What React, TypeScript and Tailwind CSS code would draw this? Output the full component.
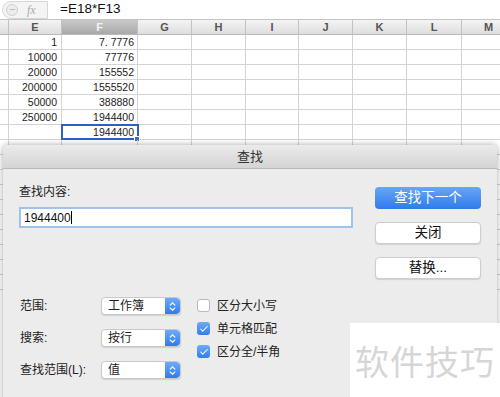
import { Check } from 'lucide-react'

const cols = [
  { key: '', w: 'w-[9px]' },
  { key: 'E', w: 'w-[53px]' },
  { key: 'F', w: 'w-[76px]' },
  { key: 'G', w: 'w-[54px]' },
  { key: 'H', w: 'w-[54px]' },
  { key: 'I', w: 'w-[53px]' },
  { key: 'J', w: 'w-[54px]' },
  { key: 'K', w: 'w-[54px]' },
  { key: 'L', w: 'w-[55px]' },
  { key: 'M', w: 'w-[54px]' },
]

const rows: [string, string][] = [
  ['1', '7. 7776'],
  ['10000', '77776'],
  ['20000', '155552'],
  ['200000', '1555520'],
  ['50000', '388880'],
  ['250000', '1944400'],
  ['', '1944400'],
  ['', ''],
  ['', ''],
  ['', ''],
  ['', ''],
  ['', ''],
  ['', ''],
  ['', ''],
  ['', ''],
  ['', ''],
  ['', ''],
]

function Stepper() {
  return (
    <div className="w-[15px] self-stretch rounded-r-[4px] bg-gradient-to-b from-[#6cabfa] to-[#2d7cf0] flex flex-col items-center justify-center gap-[1px]">
      <svg width="7" height="4" viewBox="0 0 7 4">
        <path d="M0.8 3.4 L3.5 0.8 L6.2 3.4" stroke="white" strokeWidth="1.1" fill="none" />
      </svg>
      <svg width="7" height="4" viewBox="0 0 7 4">
        <path d="M0.8 0.6 L3.5 3.2 L6.2 0.6" stroke="white" strokeWidth="1.1" fill="none" />
      </svg>
    </div>
  )
}

function Select({ label }: { label: string }) {
  return (
    <div className="h-[18px] w-[80px] flex bg-white rounded-[4px] border border-[#c9c9c9] shadow-[0_1px_1px_rgba(0,0,0,0.12)] overflow-hidden">
      <div className="flex-1 pl-[6px] text-[12px] leading-[16px] text-[#222]">{label}</div>
      <Stepper />
    </div>
  )
}

function CheckBox({ checked, label }: { checked: boolean; label: string }) {
  return (
    <div className="flex items-center gap-[7px] h-[23px]">
      {checked ? (
        <div className="w-[13px] h-[13px] rounded-[3px] bg-gradient-to-b from-[#6cabfa] to-[#2f7ef0] flex items-center justify-center">
          <Check size={10} strokeWidth={2.5} className="text-white" />
        </div>
      ) : (
        <div className="w-[13px] h-[13px] rounded-[3px] bg-white border border-[#b9b9b9]" />
      )}
      <span className="text-[12px] text-[#222]">{label}</span>
    </div>
  )
}

function Button({ label, primary }: { label: string; primary?: boolean }) {
  return (
    <div
      className={
        primary
          ? 'h-[22px] rounded-[4px] bg-gradient-to-b from-[#67a6f8] to-[#2f7be9] text-white flex items-center justify-center text-[13.5px]'
          : 'h-[22px] rounded-[4px] bg-white border border-[#cdcdcd] shadow-[0_1px_1px_rgba(0,0,0,0.12)] text-[#111] flex items-center justify-center text-[13.5px]'
      }
    >
      {label}
    </div>
  )
}

export default function App() {
  return (
    <div
      className="relative w-[500px] h-[397px] overflow-hidden bg-white"
      style={{ fontFamily: '"Liberation Sans", "Noto Sans CJK SC", sans-serif' }}
    >
      {/* Formula bar */}
      <div className="h-[20px] flex items-center border-b border-[#c4c4c4] bg-white">
        <div className="ml-[2px] h-[18px] w-[46px] rounded-l-[9px] border border-[#d6d6d6] bg-[#f4f4f4] flex items-center">
          <div className="ml-[3px] w-[12px] h-[12px] rounded-full border border-[#d0d0d0] bg-[#ececec] flex items-center justify-center">
            <div className="w-[5px] h-[1px] bg-[#bbb]" />
          </div>
          <span className="ml-[9px] text-[12px] italic text-[#aaa]" style={{ fontFamily: '"Liberation Serif", serif' }}>fx</span>
        </div>
        <span className="ml-[12px] text-[13.5px] text-[#111]">=E18*F13</span>
      </div>

      {/* Column headers */}
      <div className="flex h-[15px] border-b border-[#b9b9b9]">
        {cols.map((c) => (
          <div
            key={c.key || 'x'}
            className={
              'shrink-0 h-full border-r border-[#c2c2c2] flex items-center justify-center text-[11px] font-bold ' +
              c.w +
              (c.key === 'F'
                ? ' bg-gradient-to-b from-[#c9c9c9] to-[#a9a9a9] text-[#f4f4f4]'
                : ' bg-gradient-to-b from-[#f4f4f4] to-[#dedede] text-[#555]')
            }
          >
            {c.key}
          </div>
        ))}
      </div>

      {/* Cells */}
      {rows.map((r, i) => (
        <div key={i} className="flex h-[15px] border-b border-[#d3d3d3]">
          {cols.map((c, j) => {
            const sel = i === 6 && j === 2
            return (
              <div
                key={j}
                className={
                  'shrink-0 h-full border-r border-[#d3d3d3] text-[10.5px] text-[#222] leading-[14px] text-right relative ' +
                  c.w +
                  (j === 1 ? ' pr-[4px]' : ' pr-[3px]') +
                  (sel ? ' outline-2 outline-[#2f5fc4] -outline-offset-1' : '')
                }
              >
                {j === 1 ? r[0] : j === 2 ? r[1] : ''}
                {sel && <div className="absolute -right-[3px] -bottom-[3px] w-[6px] h-[6px] bg-[#3b6fd6] border border-white" />}
              </div>
            )
          })}
        </div>
      ))}

      {/* Find dialog */}
      <div className="absolute left-[3px] top-[145px] w-[494px] h-[260px] rounded-t-[5px] bg-[#ececec] shadow-[0_0_6px_rgba(0,0,0,0.35)] flex flex-col">
        <div className="h-[24px] shrink-0 rounded-t-[5px] bg-gradient-to-b from-[#ebebeb] to-[#d4d4d4] border-b border-[#b8b8b8] flex items-center justify-center text-[13px] text-[#333]">
          查找
        </div>

        <div className="flex">
          <div className="flex-1 pl-[16px] pt-[16px]">
            <div className="text-[12px] leading-[14px] text-[#222]">查找内容:</div>
            <div className="mt-[8px] w-[334px] h-[21px] bg-white border-2 border-[#9fc3ef] flex items-center pl-[3px] text-[12px] text-[#111]">
              1944400<span className="w-[1px] h-[13px] bg-black" />
            </div>
          </div>
          <div className="w-[106px] mr-[16px] pt-[18px] flex flex-col gap-[13px]">
            <Button label="查找下一个" primary />
            <Button label="关闭" />
            <Button label="替换..." />
          </div>
        </div>

        <div className="flex pl-[17px] pt-[18px]">
          <div className="w-[81px] flex flex-col gap-[14px] text-[12px] text-[#222]">
            <div className="h-[18px] leading-[18px]">范围:</div>
            <div className="h-[18px] leading-[18px]">搜索:</div>
            <div className="h-[18px] leading-[18px]">查找范围(L):</div>
          </div>
          <div className="w-[80px] flex flex-col gap-[14px]">
            <Select label="工作簿" />
            <Select label="按行" />
            <Select label="值" />
          </div>
          <div className="ml-[16px] -mt-[3px] flex flex-col">
            <CheckBox checked={false} label="区分大小写" />
            <CheckBox checked label="单元格匹配" />
            <CheckBox checked label="区分全/半角" />
          </div>
        </div>
      </div>

      {/* Watermark */}
      <div className="absolute left-[350px] top-[323px] w-[150px] h-[74px] bg-white flex items-center pl-[5px]">
        <span className="text-[34px] text-[#d6d6d6] tracking-[1px]" style={{ fontFamily: '"Noto Sans CJK SC", sans-serif' }}>软件技巧</span>
      </div>
    </div>
  )
}
